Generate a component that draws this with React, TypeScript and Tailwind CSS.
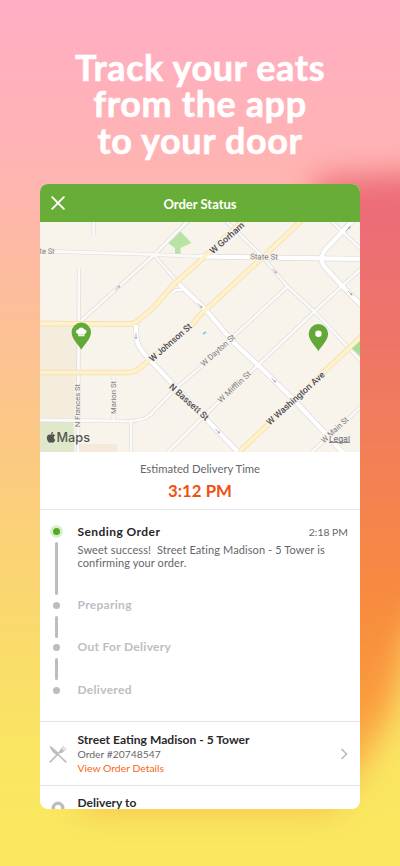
import React from "react";

type Pt = string;

const whiteRoads: { d: Pt; w: number }[] = [
  { d: "M93.5 215V235", w: 2.6 },
  { d: "M79 268L78 452", w: 2.8 },
  { d: "M192 217L154 255L83 319L78 326", w: 2.8 },
  { d: "M154 255L180 285", w: 2.6 },
  { d: "M40 251L154 254.5L200 256.5", w: 2.8 },
  { d: "M222 217L262 256L287 286L315 312L362 362", w: 2.6 },
  { d: "M327 217L362 250", w: 2.6 },
  { d: "M40 420L122 421Q142 422 150 415L176 388L202 366L262 310L287 287", w: 2.8 },
  { d: "M168 452L207 413L258 365L315 311L342 286L362 268", w: 2.8 },
  { d: "M312 452L362 406", w: 2.6 },
  { d: "M113.5 374V421", w: 2.4 },
  { d: "M131 421V452", w: 2.8 },
];

const wideRoads: { d: Pt; w: number }[] = [
  { d: "M200 256.5L362 259", w: 4.2 },
  { d: "M179 284L206 310L233 342L258 365L292 398L325 433L343 453", w: 4.2 },
  { d: "M136 325L136.500 338Q137 346 147 357L171 382L205 418L239 453", w: 4.2 },
  { d: "M356 217L325 250Q319 258 324 266L343 287L362 306", w: 4.2 },
  { d: "M172 293L176 290L183 290", w: 2.4 },
];

const yellowRoads: Pt[] = [
  "M38 323.500L129 324Q135 324 140 319L154 307L173 285L200 261L247 217",
  "M38 372.500L129 372.500Q135 372 140 368L154 356L190 327L200 315L263 257L304 218",
  "M238 453L362 336",
];

const labels = [
  { t: "W Gorham", x: 227, y: 238, a: -42, w: 43, s: 9, b: true },
  { t: "W Johnson St", x: 170.5, y: 342.5, a: -41, w: 53, s: 9, b: true },
  { t: "N Bassett St", x: 189, y: 402, a: 42, w: 50, s: 9, b: true },
  { t: "W Washington Ave", x: 295.5, y: 398.5, a: -42, w: 75, s: 9, b: true },
  { t: "State St", x: 264, y: 257, a: 1, w: 28, s: 8, b: false },
  { t: "te St", x: 47, y: 251.5, a: 1, w: 15, s: 8, b: false },
  { t: "W Dayton St", x: 218, y: 350.5, a: -42, w: 43, s: 8, b: false },
  { t: "W Mifflin St", x: 234.5, y: 387, a: -43, w: 42, s: 8, b: false },
  { t: "W Main St", x: 335, y: 430, a: -43, w: 34, s: 8, b: false },
  { t: "N Frances St", x: 77, y: 405.5, a: -90, w: 43, s: 8, b: false },
  { t: "Marion St", x: 113, y: 397.5, a: -90, w: 33, s: 8, b: false },
];

const ticks = [
  [117.5, 288, -42],
  [274.5, 271, 45],
  [348, 229, -45],
  [350, 293, 45],
  [200, 305.5, 45],
  [136, 336, 90],
  [273.5, 380, 45],
  [217.5, 431, 45],
];

function Pin({ x, y, children }: { x: number; y: number; children: React.ReactNode }) {
  return (
    <g transform={`translate(${x} ${y})`}>
      <path d="M0 17.500C-1.500 13.500-9.700 7.500-9.700 0A9.700 9.700 0 0 1 9.700 0C9.700 7.500 1.500 13.500 0 17.500Z" fill="#62a937" />
      {children}
    </g>
  );
}

function StreetMap() {
  return (
    <svg viewBox="40 222 320 230" className="block h-[230px] w-full shrink-0" fill="none">
      <rect x="40" y="222" width="320" height="230" fill="#f8f4ec" />
      <path d="M40 325H77V420H40Z" fill="#f4ecdd" />
      <path d="M40 421H74V452H40Z" fill="#e0e8cb" />
      <path d="M80 444H117V452H80Z" fill="#f5ead9" />
      <path d="M180 231L191.500 243L180.500 248V254H175V248L168 243Z" fill="#b9e3a4" />
      <g strokeLinejoin="round">
        {whiteRoads.map((r) => <path key={r.d} d={r.d} stroke="#dedbdc" strokeWidth={r.w + 1.4} />)}
        {wideRoads.map((r) => <path key={r.d} d={r.d} stroke="#dedbdc" strokeWidth={r.w + 1.4} />)}
        {whiteRoads.map((r) => <path key={r.d} d={r.d} stroke="#fbfaf8" strokeWidth={r.w} />)}
        {yellowRoads.map((d) => <path key={d} d={d} stroke="#f4d9ac" strokeWidth="5.400" />)}
        {wideRoads.map((r) => <path key={r.d} d={r.d} stroke="#ffffff" strokeWidth={r.w} />)}
        {yellowRoads.map((d) => <path key={d} d={d} stroke="#fef2cb" strokeWidth="4" />)}
      </g>
      <path d="M352 348.500L360 341V356Z" fill="#a9dd95" />
      <path d="M203 334L206 332" stroke="#7fcdea" strokeWidth="2" />
      {ticks.map(([x, y, a]) => (
        <path key={`${x}-${y}`} d="M-3 0H3M1 -1L3 0L1 1" transform={`translate(${x} ${y}) rotate(${a})`} stroke="#aaa6ac" strokeWidth="0.800" />
      ))}
      {labels.map((l) => (
        <text
          key={l.t}
          transform={`translate(${l.x} ${l.y}) rotate(${l.a})`}
          textAnchor="middle"
          dominantBaseline="central"
          textLength={l.w}
          lengthAdjust="spacingAndGlyphs"
          fontSize={l.s}
          fontWeight={l.b ? 500 : 400}
          fill={l.b ? "#4d4b50" : "#7d7b82"}
          stroke="#f8f4ec"
          strokeWidth="2.500"
          paintOrder="stroke"
          className="font-[Roboto,sans-serif]"
        >
          {l.t}
        </text>
      ))}
      <Pin x={81.3} y={332.3}>
        <path d="M-3.300 4V1.600C-6.300 1-5.500-3-2.900-2.700C-2-5.600 2-5.600 2.900-2.700C5.500-3 6.300 1 3.300 1.600V4Z" fill="#fff" />
        <path d="M-3.300 2.500H3.300" stroke="#62a937" strokeWidth="0.400" />
      </Pin>
      <Pin x={318.4} y={333.8}>
        <circle r="3.200" fill="#fff" />
      </Pin>
      <g fill="#55554f">
        <path d="M51 434.800C52.300 434 54.500 434.300 55 435.500C53.200 436.700 53.500 439 55.300 439.800C54.700 441.600 53.500 443 52.500 442.700C51.500 442.300 51 442.300 50.100 442.700C48.400 443.200 46.500 439.500 46.900 437C47.300 434.600 49.400 434 51 434.800ZM51 434.200C50.900 432.900 51.800 431.900 53 431.700C53.200 432.900 52.300 434.100 51 434.200Z" />
        <text x="56.500" y="442.300" fontSize="12.500" fontWeight="500" textLength="33.500" lengthAdjust="spacingAndGlyphs" className="font-[Inter,sans-serif]">Maps</text>
      </g>
      <text x="329" y="441.500" fontSize="8" fontWeight="500" textLength="21" lengthAdjust="spacingAndGlyphs" fill="#77757a" stroke="#f8f4ec" strokeWidth="1.500" paintOrder="stroke" className="font-[Inter,sans-serif]">Legal</text>
      <path d="M329 442.500H350" stroke="#8a888c" strokeWidth="1" />
    </svg>
  );
}

function Step({ label, bar }: { label: string; bar: boolean }) {
  return (
    <div className="flex h-[42.5px] shrink-0">
      <div className="flex w-[37.500px] flex-col items-center pr-[4.500px]">
        <div className="size-[7px] rounded-full bg-[#bcbcc2]" />
        {bar && <div className="mt-[7px] h-[22px] w-[2.500px] rounded-full bg-[#bcbcc2]" />}
      </div>
      <div className="-mt-[5px] text-[12px] leading-[16px] font-bold tracking-[0.300px] text-[#bdbdc2]">{label}</div>
    </div>
  );
}

export default function App() {
  return (
    <div className="relative flex h-[866px] w-[400px] flex-col items-center overflow-hidden bg-[linear-gradient(180deg,#ffadc3_0%,#ffb4b3_19%,#fdbd9b_34%,#fbcb80_54%,#fada6c_73%,#fae562_87%,#fae95f_100%)] font-[Lato,sans-serif]">
      <div className="absolute inset-y-0 -right-[60px] left-0 blur-[15px]">
        <div className="h-full w-full bg-[linear-gradient(180deg,#ed6c78_0,#ed6c78_205px,#ee7468_330px,#f28253_480px,#f78b3e_600px,#fa9a3c_700px,#f9b54a_770px,#f8cf54_815px)] [clip-path:polygon(315px_178px,460px_170px,460px_560px,412px_625px,392px_710px,362px_770px,330px_815px,80px_815px,80px_700px,315px_700px)]" />
      </div>
      <h1 className="relative mt-[48.500px] text-center text-[36px] leading-[36.500px] font-bold tracking-[0.600px] text-white [-webkit-text-stroke:0.600px_white]">
        Track your eats<br />from the app<br />to your door
      </h1>
      <main className="relative mt-[26px] flex h-[624.500px] w-[320px] flex-col overflow-hidden rounded-[8px] bg-white">
        <header className="relative flex h-[38px] shrink-0 items-center justify-center bg-[#68ad37] pt-[3px] text-[13px] font-bold text-white">
          <svg viewBox="0 0 14 14" className="absolute top-[12px] left-[11px] size-[14px]" stroke="#fff" strokeWidth="1.900" strokeLinecap="round"><path d="M1.200 1.200L12.800 12.800M12.800 1.200L1.200 12.800" /></svg>
          Order Status
        </header>
        <StreetMap />
        <section className="flex h-[58px] shrink-0 flex-col items-center border-b border-[#e7e7e9] pt-[9px]">
          <div className="text-[11.250px] leading-[16px] text-[#66666a]">Estimated Delivery Time</div>
          <div className="mt-[3px] text-[16.800px] leading-[22px] font-bold text-[#f1500f]">3:12 PM</div>
        </section>
        <section className="flex h-[212px] shrink-0 flex-col border-b border-[#e4e4e6]">
          <div className="flex h-[91.500px] shrink-0 pt-[14px]">
            <div className="flex w-[37.500px] flex-col items-center pr-[4.500px] pt-[1px]">
              <div className="flex size-[13px] items-center justify-center rounded-full bg-[#d9efcb]">
                <div className="size-[7.500px] rounded-full bg-[#55a827]" />
              </div>
              <div className="mt-[4px] h-[53px] w-[2.500px] rounded-full bg-[#bcbcc2]" />
            </div>
            <div className="min-w-0 flex-1">
              <div className="flex items-center justify-between pr-[12px] leading-[16px]">
                <span className="text-[12px] font-bold tracking-[0.430px] text-[#252527]">Sending Order</span>
                <span className="text-[10.400px] text-[#66666a]">2:18 PM</span>
              </div>
              <p className="mt-[3px] text-[11px] leading-[13px] tracking-[0.100px] whitespace-pre text-[#66666a]">{"Sweet success!  Street Eating Madison - 5 Tower is\nconfirming your order."}</p>
            </div>
          </div>
          <Step label="Preparing" bar />
          <Step label="Out For Delivery" bar />
          <Step label="Delivered" bar={false} />
        </section>
        <section className="flex h-[64px] shrink-0 border-b border-[#e4e4e6]">
          <svg viewBox="0 0 18 18" className="mt-[23px] ml-[8.500px] size-[18px]" fill="#bcbcc2">
            <path d="M.5.500C2 1 8.500 6.500 10 8.500L8 10.500C4 8 1 4 .5.500Z" />
            <path d="M9.500 10L16.800 16.800M1.200 16.800L12 6" stroke="#bcbcc2" strokeWidth="1.700" strokeLinecap="round" fill="none" />
            <path d="M10.500 5.500L14.500.700L15 1.200L12.800 4.200L13.300 4.700L16 2L16.500 2.500L13.800 5.200L14.300 5.700L17.300 3.500L17.700 4L13 8C11.500 8.500 10 7 10.500 5.500Z" />
          </svg>
          <div className="ml-[11px] flex-1 pt-[10px]">
            <div className="text-[12.100px] leading-[16px] font-bold text-[#29292b]">Street Eating Madison - 5 Tower</div>
            <div className="-mt-px text-[10.350px] leading-[14px] text-[#66666a]">Order #20748547</div>
            <div className="text-[10.400px] leading-[14px] text-[#fb6419]">View Order Details</div>
          </div>
          <svg viewBox="0 0 8 12" className="mt-[26px] mr-[12px] h-[12px] w-[8px]" fill="none" stroke="#bcbcc2" strokeWidth="1.700"><path d="M1.500 1L6.500 6L1.500 11" /></svg>
        </section>
        <section className="flex h-[40px] shrink-0">
          <svg viewBox="0 0 14 20" className="mt-[15px] ml-[11px] h-[20px] w-[14px]" fill="#bcbcc2"><path fillRule="evenodd" d="M7 .5A6.500 6.500 0 0 0 .5 7C.5 12 7 19 7 19S13.500 12 13.500 7A6.500 6.500 0 0 0 7 .5ZM7 4A3 3 0 1 1 7 10A3 3 0 0 1 7 4Z" /></svg>
          <div className="ml-[12.500px] pt-[9px] text-[12px] leading-[16px] font-bold text-[#29292b]">Delivery to</div>
        </section>
      </main>
    </div>
  );
}
